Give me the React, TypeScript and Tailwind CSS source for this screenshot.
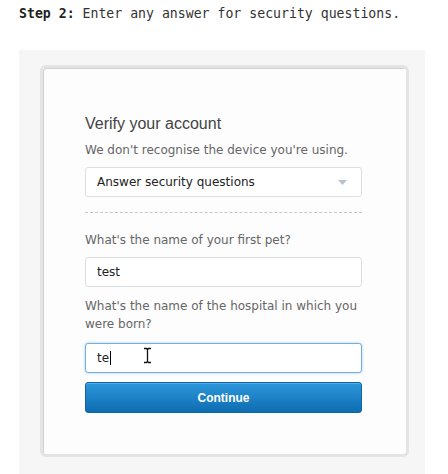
export default function App() {
  var dejavu = { fontFamily: '"DejaVu Sans", sans-serif' }
  return (
    <div className="w-[448px] h-[474px] bg-white overflow-hidden">
      <p className="pl-[19px] pt-[5px] h-[50px] text-[13.2px] leading-[18px] text-[#333] font-['DejaVu_Sans_Mono',monospace]">
        <span className="font-bold text-[#222]">Step 2:</span> Enter any answer for security questions.
      </p>
      <div className="ml-[19px] w-[406px] h-[424px] bg-[#f6f6f7] pt-[15px] pl-[21px]">
        <div className="w-[369px] rounded-md border-[3px] border-[#e4e4e4] bg-[#fdfdfe] shadow-[inset_1px_1px_0_#d2d2d2] pl-[42px] pt-[46px] pb-[41px]">
          <div className="w-[277px]" style={dejavu}>
            <h1 className="text-[16px] leading-[20px] text-[#444] font-['Liberation_Sans',Arial,sans-serif]">Verify your account</h1>
            <p className="mt-[7px] text-[12px] leading-[18px] text-[#666]">We don't recognise the device you're using.</p>
            <div className="mt-[8px] h-[30px] rounded-[3px] border border-[#dcdfe3] bg-white flex items-center justify-between pl-[11px] pr-[14px]">
              <span className="text-[12px] text-[#222]">Answer security questions</span>
              <svg width="9" height="5" viewBox="0 0 9 5"><path d="M0 0h9L4.5 5z" fill="#b9c3cc" /></svg>
            </div>
            <div className="mt-[15px] border-t border-dashed border-[#c8c8c8]" />
            <p className="mt-[18px] text-[12px] leading-[18px] text-[#666]">What's the name of your first pet?</p>
            <div className="mt-[8px] h-[30px] rounded-[3px] border border-[#dcdfe3] bg-white flex items-center pl-[11px]">
              <span className="text-[12px] text-[#222]">test</span>
            </div>
            <p className="mt-[10px] text-[12px] leading-[18px] text-[#666]">What's the name of the hospital in which you were born?</p>
            <div className="relative mt-[10px] h-[30px] rounded-[3px] border border-[#76aedb] shadow-[0_0_3px_rgba(82,168,236,0.5)] bg-white flex items-center pl-[11px]">
              <span className="text-[12px] text-[#222]">te</span>
              <span className="ml-[1px] w-[1px] h-[14px] bg-black" />
              <svg className="absolute left-[57px] top-[3px]" width="9" height="17" viewBox="0 0 9 17">
                <path d="M1 1.5h2.5l1 1 1-1H8M4.5 2.5v12M1 15.5h2.5l1-1 1 1H8" fill="none" stroke="#fff" strokeWidth="3" />
                <path d="M1 1.5h2.5l1 1 1-1H8M4.5 2.5v12M1 15.5h2.5l1-1 1 1H8" fill="none" stroke="#111" strokeWidth="1.3" />
              </svg>
            </div>
            <button className="mt-[9px] w-full h-[31px] rounded-[3px] border border-[#0b65a6] bg-gradient-to-b from-[#2d97dc] to-[#0d6db1] text-white text-[12px] font-bold font-['Liberation_Sans',Arial,sans-serif] shadow-[inset_0_1px_0_rgba(255,255,255,0.2)]">
              Continue
            </button>
          </div>
        </div>
      </div>
    </div>
  )
}
